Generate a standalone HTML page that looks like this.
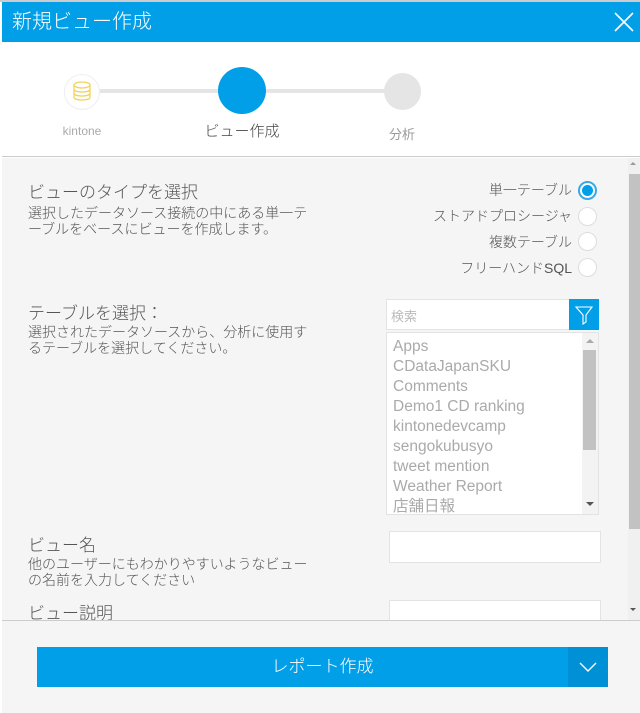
<!DOCTYPE html>
<html><head><meta charset="utf-8"><style>
*{box-sizing:border-box;margin:0;padding:0}
body{width:640px;height:713px;overflow:hidden;background:#fff;font-family:"Liberation Sans","Noto Sans CJK JP",sans-serif;position:relative}
.a{position:absolute}
.hdr{left:2px;top:2px;width:638px;height:40px;background:#009fe8;color:#fff;font-size:20px;line-height:40px;padding-left:10px;font-weight:300}
.content{left:2px;top:158px;width:626px;height:462px;background:#f5f5f5;overflow:hidden}
.t{color:#555;font-weight:300}
.radio{width:19px;height:19px;border-radius:50%;background:#fff;border:1px solid #ddd}
.lbl{font-size:14px;color:#555;text-align:right;width:200px;font-weight:300}
.list div{font-size:15.5px;color:#aaa;height:20px;line-height:20px}
</style></head><body>
<div class="a" style="left:0;top:0;width:640px;height:2px;background:#ccc"></div>
<div class="a hdr">新規ビュー作成</div>
<svg class="a" style="left:612px;top:10px" width="24" height="24"><path d="M3 3L21 21M21 3L3 21" stroke="#fff" stroke-width="1.6"/></svg>
<div class="a" style="left:2px;top:42px;width:638px;height:115px;background:#fff;border-bottom:1px solid #ccc"></div>
<div class="a" style="left:100px;top:89px;width:290px;height:4px;background:#e5e5e5"></div>
<div class="a" style="left:64px;top:74px;width:36px;height:36px;border-radius:50%;background:#fff;border:1px solid #eee"></div>
<svg class="a" style="left:72px;top:80px" width="20" height="24"><g fill="none" stroke="#f3d35a" stroke-width="1.3"><ellipse cx="10" cy="5" rx="8" ry="3"/><path d="M2 5v12c0 2 3.5 3 8 3s8-1 8-3V5M2 9c0 2 3.5 3 8 3s8-1 8-3M2 13c0 2 3.5 3 8 3s8-1 8-3"/></g></svg>
<div class="a" style="left:218px;top:67px;width:48px;height:47px;border-radius:50%;background:#009fe8"></div>
<div class="a" style="left:384px;top:73px;width:37px;height:37px;border-radius:50%;background:#e5e5e5"></div>
<div class="a" style="left:42px;top:124px;width:80px;text-align:center;font-size:12px;color:#aaa">kintone</div>
<div class="a" style="left:192px;top:120px;width:100px;text-align:center;font-size:15px;color:#444;font-weight:300">ビュー作成</div>
<div class="a" style="left:362px;top:124px;width:80px;text-align:center;font-size:13px;color:#999">分析</div>
<div class="a content">
 <div class="a t" style="left:26px;top:20px;font-size:17px">ビューのタイプを選択</div>
 <div class="a t" style="left:26px;top:47px;font-size:14px;line-height:16px">選択したデータソース接続の中にある単一テ<br>ーブルをベースにビューを作成します。</div>
 <div class="a lbl" style="left:370px;top:22px">単一テーブル</div>
 <div class="a lbl" style="left:370px;top:48px">ストアドプロシージャ</div>
 <div class="a lbl" style="left:370px;top:74px">複数テーブル</div>
 <div class="a lbl" style="left:370px;top:100px">フリーハンドSQL</div>
 <div class="a radio" style="left:576px;top:23px;border:2px solid #3aa7e8;background:#fff"><div style="margin:2px;width:11px;height:11px;border-radius:50%;background:#009fe8"></div></div>
 <div class="a radio" style="left:576px;top:49px"></div>
 <div class="a radio" style="left:576px;top:74px"></div>
 <div class="a radio" style="left:576px;top:100px"></div>
 <div class="a t" style="left:26px;top:141px;font-size:17px">テーブルを選択：</div>
 <div class="a t" style="left:26px;top:166px;font-size:14px;line-height:16px">選択されたデータソースから、分析に使用す<br>るテーブルを選択してください。</div>
 <div class="a" style="left:384px;top:141px;width:184px;height:31px;background:#fff;border:1px solid #e3e3e3;font-size:13px;color:#bbb;padding:6px 0 0 4px">検索</div>
 <div class="a" style="left:567px;top:141px;width:30px;height:31px;background:#009fe8"></div>
 <svg class="a" style="left:573px;top:147px" width="18" height="20"><path d="M1 2H17L11 10V17L8 19V10Z" fill="none" stroke="#fff" stroke-width="1.1"/></svg>
 <div class="a list" style="left:384px;top:174px;width:213px;height:183px;background:#fff;border:1px solid #e3e3e3;padding:4px 0 0 6px;overflow:hidden">
  <div>Apps</div><div>CDataJapanSKU</div><div>Comments</div><div>Demo1 CD ranking</div><div>kintonedevcamp</div><div>sengokubusyo</div><div>tweet mention</div><div>Weather Report</div><div>店舗日報</div>
 </div>
 <div class="a" style="left:580px;top:175px;width:16px;height:181px;background:#f3f3f3"></div>
 <div class="a" style="left:581px;top:192px;width:13px;height:100px;background:#c2c2c2"></div>
 <div class="a" style="left:584px;top:181px;width:0;height:0;border:4px solid transparent;border-bottom-color:#aaa;border-top:0"></div>
 <div class="a" style="left:584px;top:344px;width:0;height:0;border:4px solid transparent;border-top-color:#555;border-bottom:0"></div>
 <div class="a t" style="left:26px;top:373px;font-size:17px">ビュー名</div>
 <div class="a t" style="left:26px;top:398px;font-size:14px;line-height:16px">他のユーザーにもわかりやすいようなビュー<br>の名前を入力してください</div>
 <div class="a" style="left:387px;top:373px;width:212px;height:32px;background:#fff;border:1px solid #e3e3e3"></div>
 <div class="a t" style="left:26px;top:441px;font-size:17px">ビュー説明</div>
 <div class="a" style="left:387px;top:442px;width:212px;height:32px;background:#fff;border:1px solid #e3e3e3"></div>
</div>
<div class="a" style="left:628px;top:158px;width:12px;height:462px;background:#f0f0f0"></div>
<div class="a" style="left:629px;top:174px;width:11px;height:355px;background:#c2c2c2"></div>
<div class="a" style="left:630px;top:162px;border:3.5px solid transparent;border-bottom-color:#999;border-top:0"></div>
<div class="a" style="left:630px;top:608px;border:3.5px solid transparent;border-top-color:#555;border-bottom:0"></div>
<div class="a" style="left:2px;top:620px;width:638px;height:93px;background:#f5f5f5;border-top:1px solid #ccc"></div>
<div class="a" style="left:37px;top:647px;width:571px;height:40px;background:#009fe8;color:#fff;font-size:17px;line-height:40px;text-align:center;font-weight:300">レポート作成</div>
<div class="a" style="left:568px;top:647px;width:40px;height:40px;background:#0090d6"></div>
<svg class="a" style="left:578px;top:657px" width="20" height="20"><path d="M2 6L10 14L18 6" fill="none" stroke="#fff" stroke-width="1.4"/></svg>
</body></html>
